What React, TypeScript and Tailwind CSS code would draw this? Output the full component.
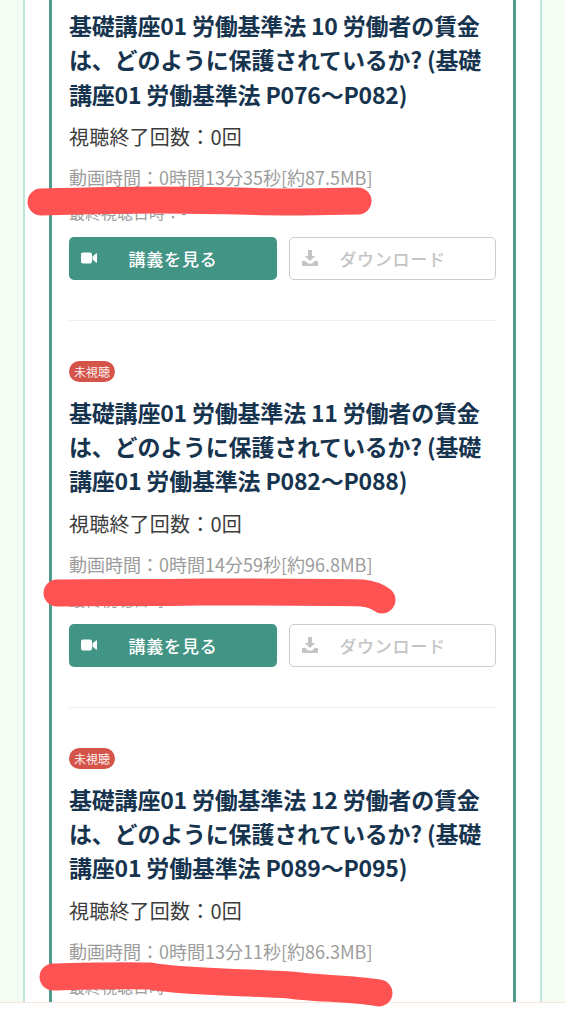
const font = { fontFamily: '"Noto Sans CJK JP", "Noto Sans", sans-serif' };

const items = [
  { title: "基礎講座01 労働基準法 10 労働者の賃金は、どのように保護されているか? (基礎講座01 労働基準法 P076〜P082)", time: "動画時間：0時間13分35秒[約87.5MB]" },
  { title: "基礎講座01 労働基準法 11 労働者の賃金は、どのように保護されているか? (基礎講座01 労働基準法 P082〜P088)", time: "動画時間：0時間14分59秒[約96.8MB]" },
  { title: "基礎講座01 労働基準法 12 労働者の賃金は、どのように保護されているか? (基礎講座01 労働基準法 P089〜P095)", time: "動画時間：0時間13分11秒[約86.3MB]" },
];

function VideoIcon() {
  return (
    <svg width="16" height="12" viewBox="0 0 16 12" fill="#fff" className="absolute left-[12px] top-[15px]">
      <rect x="0" y="0.5" width="11" height="11" rx="2" />
      <path d="M11.5 4.5 15 1.5c.4-.3 1-.1 1 .4v8.2c0 .5-.6.7-1 .4l-3.5-3z" />
    </svg>
  );
}

function DownloadIcon() {
  return (
    <svg width="16" height="16" viewBox="0 0 16 16" fill="#c4c4c4" className="absolute left-[12px] top-[12px]">
      <path d="M6 0h4v6h3.2L8 11 2.8 6H6z" />
      <path d="M0 11h3.5L6 13.5h4L12.500 11H16v5H0z" />
    </svg>
  );
}

function Item({ title, time, first }: { title: string; time: string; first: boolean }) {
  return (
    <div className={first ? "pt-[8px] pb-[40px] border-b border-[#f0f0f0]" : "pt-[40px] pb-[40px] border-b border-[#f0f0f0]"}>
      {!first && (
        <div className="mb-[13px] w-[46px] h-[21px] rounded-full bg-[#d4544a] text-[#fdeeee] text-[12px] leading-[21px] text-center">未視聴</div>
      )}
      <h2 className="text-[#17344f] text-[23px] leading-[34.300px] font-bold tracking-[-0.200px]">{title}</h2>
      <p className="mt-[9px] text-[#3c3c3c] text-[20px] leading-[34px] tracking-[0.200px]">視聴終了回数：0回</p>
      <p className="mt-[9px] text-[#9c9c9c] text-[18px] leading-[28px]">{time}</p>
      <p className="mt-[7px] text-[#9c9c9c] text-[16px] leading-[28px]">最終視聴日時：-</p>
      <div className="mt-[11px] flex justify-between">
        <button className="relative w-[208px] h-[43px] rounded-[5px] bg-[#429485] text-white text-[17px] font-medium tracking-[0.800px]">
          <VideoIcon />
          講義を見る
        </button>
        <button className="relative w-[207px] h-[43px] rounded-[5px] border-[1.500px] border-[#cccccc] bg-white text-[#c4c4c4] text-[17px] font-medium tracking-[0.700px]">
          <DownloadIcon />
          ダウンロード
        </button>
      </div>
    </div>
  );
}

export default function App() {
  return (
    <div style={font} className="relative w-[565px] h-[1024px] overflow-hidden bg-white">
      <div className="h-[1002px] overflow-hidden bg-[#f4fcf4] px-[23px]">
        <div className="h-full bg-white border-x-2 border-[#bfe6dd] px-[24px]">
          <div className="h-full border-x-[3px] border-[#4f9c8e] px-[17px] overflow-hidden">
            {items.map((it, i) => (
              <Item key={it.time} first={i === 0} {...it} />
            ))}
          </div>
        </div>
      </div>
      <div className="h-[22px] bg-white border-t border-[#f5e6dc]" />
      <svg width="565" height="1024" viewBox="0 0 565 1024" fill="none" className="absolute inset-0 pointer-events-none">
        <g stroke="#ff5252" strokeWidth="27" strokeLinecap="round" strokeLinejoin="round">
          <path d="M41 202C80 201 120 200 160 200C210 200 260 202 300 202L358 201" />
          <path d="M57 593C100 592 150 593 200 592C260 592 330 592 362 593C372 594 378 597 382 600" />
          <path d="M53 977C90 976 120 975 150 976C180 982 240 982 290 985C320 989 350 988 379 993" />
        </g>
      </svg>
    </div>
  );
}
